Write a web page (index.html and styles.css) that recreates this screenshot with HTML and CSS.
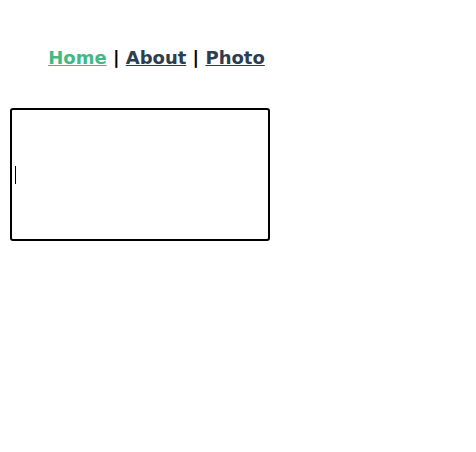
FILE: index.html
```html
<!DOCTYPE html>
<html>
<head>
<meta charset="utf-8">
<link rel="stylesheet" href="styles.css">
</head>
<body>
<div class="app">
  <nav class="nav">
    <a class="link active" href="#">Home</a> | <a class="link" href="#">About</a> | <a class="link" href="#">Photo</a>
  </nav>
</div>
<div class="editor"><span class="caret"></span></div>
</body>
</html>
```

FILE: styles.css
```css
body {
  margin: 8px;
  background: #ffffff;
  font-family: "DejaVu Sans", sans-serif;
}
.app {
  width: 297px;
  text-align: center;
  color: #2c3e50;
}
.nav {
  padding: 38px 30px 30px;
  font-size: 18px;
  line-height: 24px;
  font-weight: bold;
  color: #000;
}
.link {
  color: #2c3e50;
  text-decoration: underline;
}
.link.active {
  color: #42b983;
}
.editor {
  box-sizing: border-box;
  margin: 8px 2px 0;
  width: 260px;
  height: 133px;
  border: 2px solid #000;
  border-radius: 3px;
  display: flex;
  align-items: center;
  padding-left: 3px;
}
.caret {
  display: block;
  width: 1px;
  height: 18px;
  background: #000;
}
```
